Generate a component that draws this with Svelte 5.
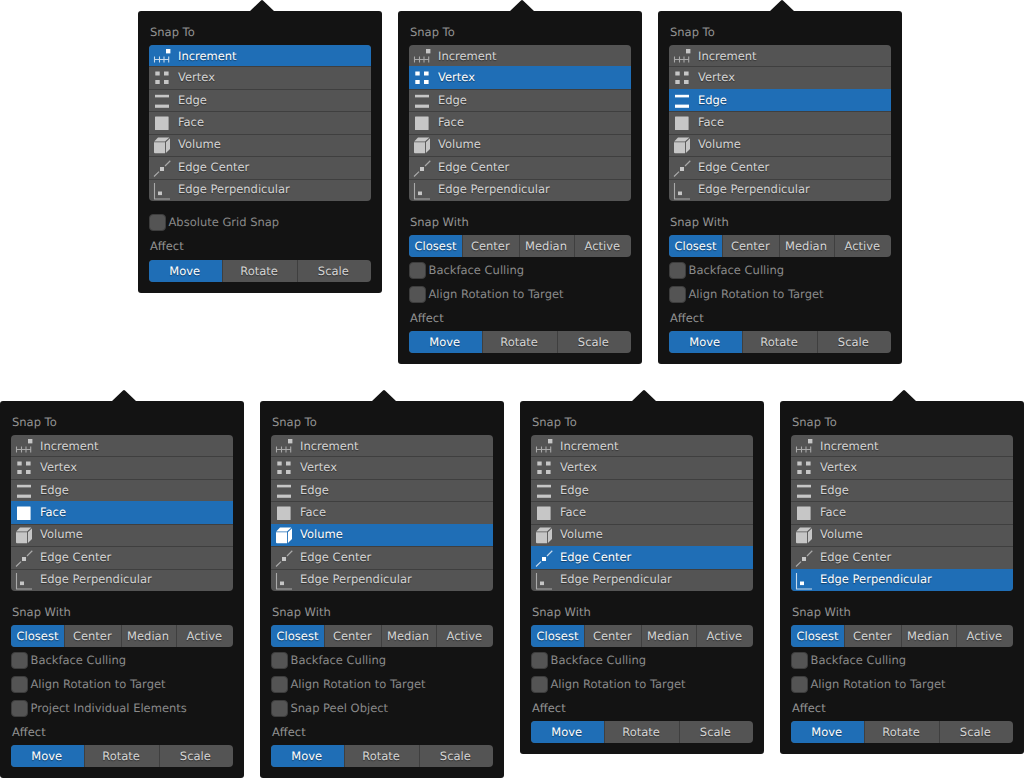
<script>
  const snapItems = ['Increment','Vertex','Edge','Face','Volume','Edge Center','Edge Perpendicular'];
  const withItems = ['Closest','Center','Median','Active'];
  const affectItems = ['Move','Rotate','Scale'];
  const base = ['Backface Culling','Align Rotation to Target'];
  const panels = [
    { x:138, y:11,  active:0, snapWith:false, checks:['Absolute Grid Snap'] },
    { x:398, y:11,  active:1, snapWith:true, checks:base },
    { x:658, y:11,  active:2, snapWith:true, checks:base },
    { x:0,   y:401, active:3, snapWith:true, checks:[...base,'Project Individual Elements'] },
    { x:260, y:401, active:4, snapWith:true, checks:[...base,'Snap Peel Object'] },
    { x:520, y:401, active:5, snapWith:true, checks:base },
    { x:780, y:401, active:6, snapWith:true, checks:base }
  ];
</script>

{#snippet icon(i)}
  <svg class="icon" width="22" height="22" viewBox="0 0 22 22" fill="currentColor">
    {#if i === 0}
      <rect x="17" y="4" width="4.4" height="4.4" />
      <path d="M5.5 11.5v6M10.5 11.5v6M15 11.5v6M19.7 11.5v6M5.5 14.5h14" stroke="currentColor" stroke-width="1.1" fill="none" opacity=".75" />
    {:else if i === 1}
      <rect x="6.3" y="4.5" width="4.4" height="4" /><rect x="15" y="4.5" width="4.6" height="4" />
      <rect x="6.3" y="13" width="4.4" height="4" /><rect x="15" y="13" width="4.6" height="4" />
    {:else if i === 2}
      <rect x="6" y="4.8" width="14" height="2.6" /><rect x="6" y="14.6" width="14" height="3.2" />
    {:else if i === 3}
      <rect x="6" y="4.5" width="13.6" height="13.4" rx=".5" />
    {:else if i === 4}
      <path d="M5.2 7.5 9 3.4h11.4L16 7.5Z" />
      <path d="M16.9 8.3 21 4.2V15l-4.1 4Z" />
      <path d="M5 8.3h11V19.2H6a1 1 0 0 1-1-1Z" />
    {:else if i === 5}
      <path d="M5 19.5 10 14.6M16 9 21.3 3.8" stroke="currentColor" stroke-width="1.2" fill="none" opacity=".75" />
      <rect x="11" y="10" width="4" height="4" />
    {:else}
      <path d="M5.5 4v16H21" stroke="currentColor" stroke-width="1.1" fill="none" opacity=".75" />
      <rect x="9" y="12.5" width="4" height="3.6" />
    {/if}
  </svg>
{/snippet}

<main class="canvas">
  {#each panels as p}
    <section class="panel" style="left:{p.x}px;top:{p.y}px">
      <svg class="arrow" width="24" height="11" viewBox="0 0 24 11"><path d="M0 11 11 .6a1.4 1.4 0 0 1 2 0L24 11Z" /></svg>
      <div class="label first">Snap To</div>
      <div class="list">
        {#each snapItems as item, i}
          <div class="row" class:on={i === p.active}>
            {@render icon(i)}
            <span>{item}</span>
          </div>
        {/each}
      </div>
      <div class="after">
        {#if p.snapWith}
          <div class="label">Snap With</div>
          <div class="seg with">
            {#each withItems as s, i}<div class="cell" class:on={i === 0}>{s}</div>{/each}
          </div>
          <div class="checks">
            {#each p.checks as c}
              <label class="check"><i></i><span>{c}</span></label>
            {/each}
          </div>
        {:else}
          <label class="check solo"><i></i><span>{p.checks[0]}</span></label>
        {/if}
        <div class="label" class:tight={!p.snapWith}>Affect</div>
        <div class="seg affect">
          {#each affectItems as s, i}<div class="cell" class:on={i === 0}>{s}</div>{/each}
        </div>
      </div>
    </section>
  {/each}
</main>

<style>
  :global(body) { margin: 0; background: #fff; }
  .canvas {
    position: relative;
    width: 1024px;
    height: 778px;
    overflow: hidden;
    font-family: "DejaVu Sans", sans-serif;
    font-size: 11.5px;
    text-rendering: geometricPrecision;
  }
  .panel {
    position: absolute;
    width: 244px;
    box-sizing: border-box;
    padding: 0 11px 11px;
    background: #131313;
    border-radius: 3px;
    color: #8f8f8f;
  }
  .arrow { position: absolute; left: 112px; top: -11px; display: block; }
  .arrow path { fill: #131313; }
  .label {
    height: 24px;
    line-height: 25px;
    color: #949494;
    padding-left: 1px;
  }
  .label.first { height: 34px; line-height: 42px; }
  .label.tight { height: 25px; line-height: 24px; }
  .list {
    height: 156px;
    display: flex;
    flex-direction: column;
    border-radius: 4px;
    overflow: hidden;
    background: #545454;
  }
  .row {
    flex: 1 1 0;
    min-height: 0;
    display: flex;
    align-items: center;
    color: #d6d6d6;
    text-shadow: 0 1px 1px rgba(0,0,0,.45);
    border-top: 1px solid #3f3f3f;
    box-sizing: border-box;
  }
  .row:first-child { border-top: 0; }
  .row:not(:first-child) span { padding-bottom: 2px; }
  .row.on { background: #1f6eb6; color: #fff; border-top-color: #1f6eb6; }
  .row .icon { flex: none; margin: -1px 7px -1px 0; color: #c6c6c6; }
  .row.on .icon { color: #fff; }
  .after { padding-top: 9px; }
  .seg {
    display: flex;
    height: 22px;
    margin-top: 1px;
    border-radius: 4px;
    overflow: hidden;
    background: #545454;
    color: #d6d6d6;
    text-shadow: 0 1px 1px rgba(0,0,0,.45);
  }
  .cell {
    flex: 1 1 0;
    box-sizing: border-box;
    text-align: center;
    line-height: 22px;
    padding-right: 1px;
    border-left: 1px solid #3f3f3f;
  }
  .seg.with .cell:nth-child(1) { flex: 54.5 1 0; padding-right: 0; }
  .seg.with .cell:nth-child(2) { flex: 56 1 0; }
  .seg.with .cell:nth-child(3) { flex: 54.5 1 0; }
  .seg.with .cell:nth-child(4) { flex: 57 1 0; }
  .seg.affect .cell { padding-right: 2px; }
  .cell:first-child { border-left: 0; }
  .cell.on { background: #1f6eb6; color: #fff; }
  .checks { padding-top: 1px; }
  .check {
    display: flex;
    align-items: center;
    height: 24px;
    color: #8a8a8a;
  }
  .check i {
    width: 17px;
    height: 17px;
    box-sizing: border-box;
    border-radius: 4px;
    background: #545454;
    border: 1px solid #3d3d3d;
    margin-right: 2.5px;
    flex: none;
  }
</style>
